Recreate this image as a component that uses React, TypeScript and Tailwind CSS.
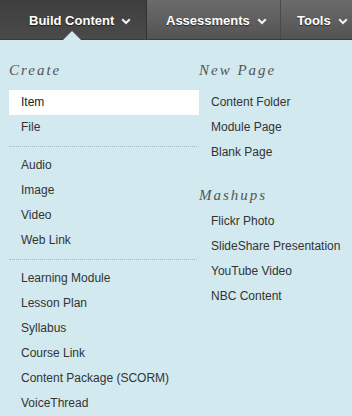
import React from "react";

const Chevron = () => (
  <svg width="10" height="7" viewBox="0 0 10 7" className="ml-[7px] mt-[2px]">
    <path d="M1.2 1.2 L5 5 L8.8 1.2" fill="none" stroke="#f2f2f2" strokeWidth="2" />
  </svg>
);

const Row = ({ label, active }: { label: string; active?: boolean }) => (
  <div
    className={`h-[25px] leading-[25px] pl-[12px] text-[12px] ${active ? "bg-white text-[#222]" : "text-[#333]"}`}
  >
    {label}
  </div>
);

const Sep = () => (
  <div className="h-[13px] flex items-start pt-[6px]">
    <div className="w-[188px] border-t border-dotted border-[#a9b6bb]" />
  </div>
);

const Header = ({ label }: { label: string }) => (
  <div
    className="h-[20px] leading-[20px] text-[15px] italic tracking-[2px] text-[#555]"
    style={{ fontFamily: '"Liberation Serif", serif' }}
  >
    {label}
  </div>
);

export default function App() {
  return (
    <div
      className="w-[352px] h-[416px] overflow-hidden bg-[#d2e9ef]"
      style={{ fontFamily: '"Liberation Sans", Arial, sans-serif' }}
    >
      <div className="h-[40px] flex text-white font-bold text-[13px] bg-gradient-to-b from-[#6b6b6b] to-[#535353] border-b border-[#3a3a3a]">
        <div className="relative w-[147px] flex items-center pl-[29px] pt-[2px] bg-gradient-to-b from-[#3e3e3e] to-[#4a4a4a] border-r border-[#333]">
          <span className="[text-shadow:0_1px_1px_rgba(0,0,0,0.6)]">Build Content</span>
          <Chevron />
          <div className="absolute left-[63px] bottom-[-1px] w-0 h-0 border-l-[9px] border-r-[9px] border-b-[9px] border-l-transparent border-r-transparent border-b-[#d2e9ef]" />
        </div>
        <div className="w-[134px] flex items-center pl-[19px] pt-[2px] border-r border-[#4a4a4a]">
          <span className="[text-shadow:0_1px_1px_rgba(0,0,0,0.6)]">Assessments</span>
          <Chevron />
        </div>
        <div className="flex-1 flex items-center pl-[16px] pt-[2px]">
          <span className="[text-shadow:0_1px_1px_rgba(0,0,0,0.6)]">Tools</span>
          <Chevron />
        </div>
      </div>
      <div className="flex pl-[9px] pt-[20px]">
        <div className="w-[190px]">
          <Header label="Create" />
          <div className="mt-[9px] pt-[1px]">
            <Row label="Item" active />
            <Row label="File" />
            <Sep />
            <Row label="Audio" />
            <Row label="Image" />
            <Row label="Video" />
            <Row label="Web Link" />
            <Sep />
            <Row label="Learning Module" />
            <Row label="Lesson Plan" />
            <Row label="Syllabus" />
            <Row label="Course Link" />
            <Row label="Content Package (SCORM)" />
            <Row label="VoiceThread" />
          </div>
        </div>
        <div className="flex-1">
          <Header label="New Page" />
          <div className="mt-[10px]">
            <Row label="Content Folder" />
            <Row label="Module Page" />
            <Row label="Blank Page" />
          </div>
          <div className="mt-[20px]">
            <Header label="Mashups" />
          </div>
          <div className="mt-[4px]">
            <Row label="Flickr Photo" />
            <Row label="SlideShare Presentation" />
            <Row label="YouTube Video" />
            <Row label="NBC Content" />
          </div>
        </div>
      </div>
    </div>
  );
}
